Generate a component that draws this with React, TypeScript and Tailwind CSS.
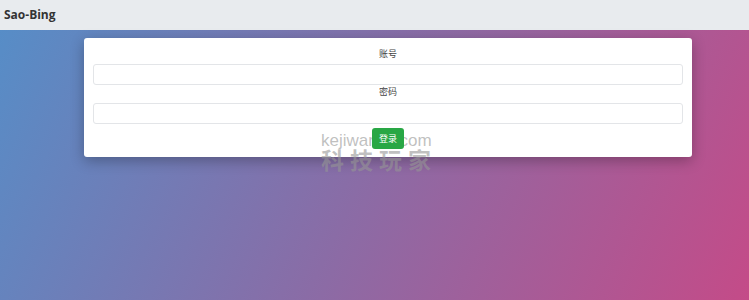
export default function App() {
  return (
    <div className="relative w-[749px] h-[300px] overflow-hidden bg-[linear-gradient(115deg,#558ec8_0%,#8a6ca6_50%,#c44b88_100%)] font-['Noto_Sans','Noto_Sans_CJK_SC',sans-serif]">
      {/* Header */}
      <div className="h-[30px] bg-[#e8ebee] flex items-center px-[4px]">
        <span className="text-[12px] font-bold text-[#333] font-['Open_Sans',sans-serif]">Sao-Bing</span>
      </div>

      {/* Login card */}
      <div className="mt-[8px] ml-[84px] w-[608px] bg-white rounded-[3px] shadow-[0_4px_14px_rgba(0,0,0,0.28)] pt-[10px] px-[9px] pb-[8px] flex flex-col">
        <div className="h-[12px] leading-[12px] text-center text-[9px] text-[#444] mb-[4px]">账号</div>
        <input className="h-[21px] w-full border border-[#e3e5e8] rounded-[3px] outline-none" />
        <div className="h-[12px] leading-[12px] text-center text-[9px] text-[#444] mt-[1px] mb-[5px]">密码</div>
        <input type="password" className="h-[21px] w-full border border-[#e3e5e8] rounded-[3px] outline-none" />
        <div className="mt-[4px] flex justify-center">
          <button className="relative z-10 h-[21px] w-[32px] bg-[#28a745] text-white text-[9px] rounded-[3px]">登录</button>
        </div>
      </div>

      {/* Watermark */}
      <div className="absolute left-[321px] top-[132px] pointer-events-none text-[rgba(150,150,150,0.6)] leading-none">
        <div className="text-[17px] font-['Liberation_Sans',sans-serif]">kejiwanjia.com</div>
        <div className="text-[23px] font-semibold tracking-[6px] mt-[-1px] font-['Noto_Sans_CJK_SC',sans-serif]">科技玩家</div>
      </div>
    </div>
  );
}
